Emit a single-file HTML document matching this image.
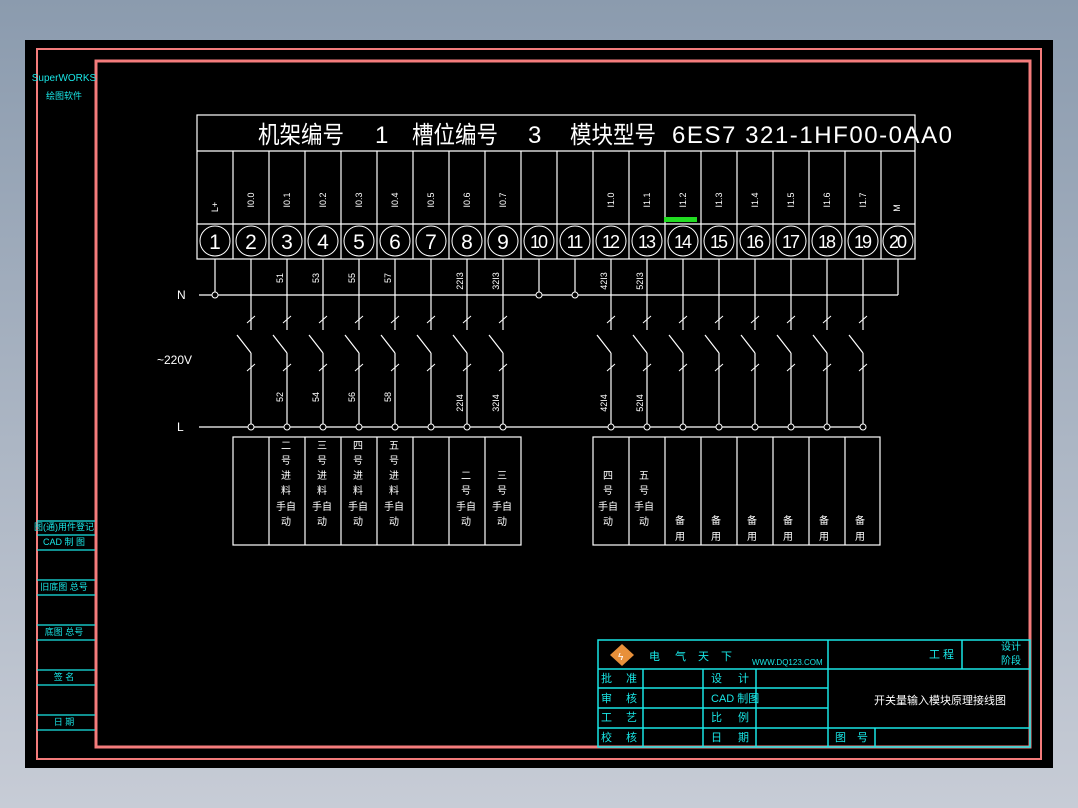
<!DOCTYPE html>
<html><head><meta charset="utf-8"><style>
html,body{margin:0;padding:0;width:1078px;height:808px;overflow:hidden;background:linear-gradient(#8b9bae,#c7ccd6);}
svg{position:absolute;left:0;top:0}
text{font-family:"Liberation Sans","Noto Sans CJK SC",sans-serif}
</style></head><body>
<svg width="1078" height="808" viewBox="0 0 1078 808">
<rect x="25" y="40" width="1028" height="728" fill="#000"/>
<rect x="37" y="49" width="1004" height="710" fill="none" stroke="#f47c7c" stroke-width="2"/>
<rect x="96" y="61" width="934" height="686" fill="none" stroke="#f47c7c" stroke-width="3"/>
<g fill="#19e6e6" font-size="10" text-anchor="middle">
<text x="64" y="81">SuperWORKS</text>
<text x="64" y="99" font-size="9">绘图软件</text>
<text x="64" y="530" font-size="9">图(通)用件登记</text>
<text x="64" y="545" font-size="9">CAD 制 图</text>
<text x="64" y="590" font-size="9">旧底图 总号</text>
<text x="64" y="635" font-size="9">底图 总号</text>
<text x="64" y="680" font-size="9">签 名</text>
<text x="64" y="725" font-size="9">日 期</text>
</g>
<g stroke="#19e6e6" stroke-width="1.2">
<line x1="37" y1="521" x2="95" y2="521"/><line x1="37" y1="535" x2="95" y2="535"/><line x1="37" y1="550" x2="95" y2="550"/>
<line x1="37" y1="580" x2="95" y2="580"/><line x1="37" y1="595" x2="95" y2="595"/>
<line x1="37" y1="625" x2="95" y2="625"/><line x1="37" y1="640" x2="95" y2="640"/>
<line x1="37" y1="670" x2="95" y2="670"/><line x1="37" y1="685" x2="95" y2="685"/>
<line x1="37" y1="715" x2="95" y2="715"/><line x1="37" y1="730" x2="95" y2="730"/>
</g>
<g stroke="#fff" stroke-width="1.2" fill="none">
<rect x="197" y="115" width="718" height="144"/>
<line x1="197" y1="151" x2="915" y2="151"/><line x1="197" y1="224" x2="915" y2="224"/>
<path d="M233 151V259M269 151V259M305 151V259M341 151V259M377 151V259M413 151V259M449 151V259M485 151V259M521 151V259M557 151V259M593 151V259M629 151V259M665 151V259M701 151V259M737 151V259M773 151V259M809 151V259M845 151V259M881 151V259"/>
<g stroke-width="1">
<circle cx="215" cy="241" r="15"/><circle cx="251" cy="241" r="15"/><circle cx="287" cy="241" r="15"/><circle cx="323" cy="241" r="15"/><circle cx="359" cy="241" r="15"/><circle cx="395" cy="241" r="15"/><circle cx="431" cy="241" r="15"/><circle cx="467" cy="241" r="15"/><circle cx="503" cy="241" r="15"/><circle cx="539" cy="241" r="15"/><circle cx="575" cy="241" r="15"/><circle cx="611" cy="241" r="15"/><circle cx="647" cy="241" r="15"/><circle cx="683" cy="241" r="15"/><circle cx="719" cy="241" r="15"/><circle cx="755" cy="241" r="15"/><circle cx="791" cy="241" r="15"/><circle cx="827" cy="241" r="15"/><circle cx="863" cy="241" r="15"/><circle cx="898" cy="241" r="15"/>
</g>
</g>
<rect x="664" y="217" width="33" height="5" fill="#22dd22"/>
<g fill="#fff">
<text x="258" y="143" font-size="24" textLength="86" lengthAdjust="spacingAndGlyphs">机架编号</text>
<text x="375" y="143" font-size="24">1</text>
<text x="412" y="143" font-size="24" textLength="86" lengthAdjust="spacingAndGlyphs">槽位编号</text>
<text x="528" y="143" font-size="24">3</text>
<text x="570" y="143" font-size="24" textLength="86" lengthAdjust="spacingAndGlyphs">模块型号</text>
<text x="672" y="143" font-size="24" textLength="280" lengthAdjust="spacing">6ES7 321-1HF00-0AA0</text>
<g font-size="21" text-anchor="middle">
<text x="215" y="249">1</text><text x="251" y="249">2</text><text x="287" y="249">3</text><text x="323" y="249">4</text><text x="359" y="249">5</text><text x="395" y="249">6</text><text x="431" y="249">7</text><text x="467" y="249">8</text><text x="503" y="249">9</text>
<g font-size="18" letter-spacing="-2"><text x="538" y="248">10</text><text x="574" y="248">11</text><text x="610" y="248">12</text><text x="646" y="248">13</text><text x="682" y="248">14</text><text x="718" y="248">15</text><text x="754" y="248">16</text><text x="790" y="248">17</text><text x="826" y="248">18</text><text x="862" y="248">19</text><text x="897" y="248">20</text></g>
</g>
<g font-size="9" text-anchor="middle">
<text transform="translate(218,207) rotate(-90)">L+</text>
<text transform="translate(254,200) rotate(-90)">I0.0</text>
<text transform="translate(290,200) rotate(-90)">I0.1</text>
<text transform="translate(326,200) rotate(-90)">I0.2</text>
<text transform="translate(362,200) rotate(-90)">I0.3</text>
<text transform="translate(398,200) rotate(-90)">I0.4</text>
<text transform="translate(434,200) rotate(-90)">I0.5</text>
<text transform="translate(470,200) rotate(-90)">I0.6</text>
<text transform="translate(506,200) rotate(-90)">I0.7</text>
<text transform="translate(614,200) rotate(-90)">I1.0</text>
<text transform="translate(650,200) rotate(-90)">I1.1</text>
<text transform="translate(686,200) rotate(-90)">I1.2</text>
<text transform="translate(722,200) rotate(-90)">I1.3</text>
<text transform="translate(758,200) rotate(-90)">I1.4</text>
<text transform="translate(794,200) rotate(-90)">I1.5</text>
<text transform="translate(830,200) rotate(-90)">I1.6</text>
<text transform="translate(866,200) rotate(-90)">I1.7</text>
<text transform="translate(900,208) rotate(-90)">M</text>
</g>
<g font-size="9" text-anchor="middle">
<text transform="translate(283,278) rotate(-90)">51</text><text transform="translate(319,278) rotate(-90)">53</text><text transform="translate(355,278) rotate(-90)">55</text><text transform="translate(391,278) rotate(-90)">57</text>
<text transform="translate(463,281) rotate(-90)">22I3</text><text transform="translate(499,281) rotate(-90)">32I3</text><text transform="translate(607,281) rotate(-90)">42I3</text><text transform="translate(643,281) rotate(-90)">52I3</text>
<text transform="translate(283,397) rotate(-90)">52</text><text transform="translate(319,397) rotate(-90)">54</text><text transform="translate(355,397) rotate(-90)">56</text><text transform="translate(391,397) rotate(-90)">58</text>
<text transform="translate(463,403) rotate(-90)">22I4</text><text transform="translate(499,403) rotate(-90)">32I4</text><text transform="translate(607,403) rotate(-90)">42I4</text><text transform="translate(643,403) rotate(-90)">52I4</text>
</g>
<text x="177" y="299" font-size="12">N</text>
<text x="157" y="364" font-size="12">~220V</text>
<text x="177" y="431" font-size="12">L</text>
</g>
<g stroke="#fff" stroke-width="1.2" fill="none">
<line x1="199" y1="295" x2="898" y2="295"/>
<line x1="199" y1="427" x2="863" y2="427"/>
<path d="M215 259V295M539 259V295M575 259V295M898 259V295"/>
<path d="M251 259V330M251 353V427M237 335L251 353M287 259V330M287 353V427M273 335L287 353M323 259V330M323 353V427M309 335L323 353M359 259V330M359 353V427M345 335L359 353M395 259V330M395 353V427M381 335L395 353M431 259V330M431 353V427M417 335L431 353M467 259V330M467 353V427M453 335L467 353M503 259V330M503 353V427M489 335L503 353"/>
<path d="M611 259V330M611 353V427M597 335L611 353M647 259V330M647 353V427M633 335L647 353M683 259V330M683 353V427M669 335L683 353M719 259V330M719 353V427M705 335L719 353M755 259V330M755 353V427M741 335L755 353M791 259V330M791 353V427M777 335L791 353M827 259V330M827 353V427M813 335L827 353M863 259V330M863 353V427M849 335L863 353"/>
<g stroke-width="1">
<path d="M247 323l8-7M283 323l8-7M319 323l8-7M355 323l8-7M391 323l8-7M427 323l8-7M463 323l8-7M499 323l8-7M607 323l8-7M643 323l8-7M679 323l8-7M715 323l8-7M751 323l8-7M787 323l8-7M823 323l8-7M859 323l8-7"/>
<path d="M247 371l8-7M283 371l8-7M319 371l8-7M355 371l8-7M391 371l8-7M427 371l8-7M463 371l8-7M499 371l8-7M607 371l8-7M643 371l8-7M679 371l8-7M715 371l8-7M751 371l8-7M787 371l8-7M823 371l8-7M859 371l8-7"/>
</g>
<g fill="#000" stroke-width="1">
<circle cx="215" cy="295" r="3"/><circle cx="539" cy="295" r="3"/><circle cx="575" cy="295" r="3"/>
<circle cx="251" cy="427" r="3"/><circle cx="287" cy="427" r="3"/><circle cx="323" cy="427" r="3"/><circle cx="359" cy="427" r="3"/><circle cx="395" cy="427" r="3"/><circle cx="431" cy="427" r="3"/><circle cx="467" cy="427" r="3"/><circle cx="503" cy="427" r="3"/>
<circle cx="611" cy="427" r="3"/><circle cx="647" cy="427" r="3"/><circle cx="683" cy="427" r="3"/><circle cx="719" cy="427" r="3"/><circle cx="755" cy="427" r="3"/><circle cx="791" cy="427" r="3"/><circle cx="827" cy="427" r="3"/><circle cx="863" cy="427" r="3"/>
</g>
<rect x="233" y="437" width="288" height="108"/>
<path d="M269 437V545M305 437V545M341 437V545M377 437V545M413 437V545M449 437V545M485 437V545"/>
<rect x="593" y="437" width="287" height="108"/>
<path d="M629 437V545M665 437V545M701 437V545M737 437V545M773 437V545M809 437V545M845 437V545"/>
</g>
<g fill="#fff" font-size="10" text-anchor="middle">
<text x="286" y="449">二</text><text x="286" y="464">号</text><text x="286" y="479">进</text><text x="286" y="494">料</text><text x="286" y="510">手自</text><text x="286" y="525">动</text>
<text x="322" y="449">三</text><text x="322" y="464">号</text><text x="322" y="479">进</text><text x="322" y="494">料</text><text x="322" y="510">手自</text><text x="322" y="525">动</text>
<text x="358" y="449">四</text><text x="358" y="464">号</text><text x="358" y="479">进</text><text x="358" y="494">料</text><text x="358" y="510">手自</text><text x="358" y="525">动</text>
<text x="394" y="449">五</text><text x="394" y="464">号</text><text x="394" y="479">进</text><text x="394" y="494">料</text><text x="394" y="510">手自</text><text x="394" y="525">动</text>
<text x="466" y="479">二</text><text x="466" y="494">号</text><text x="466" y="510">手自</text><text x="466" y="525">动</text>
<text x="502" y="479">三</text><text x="502" y="494">号</text><text x="502" y="510">手自</text><text x="502" y="525">动</text>
<text x="608" y="479">四</text><text x="608" y="494">号</text><text x="608" y="510">手自</text><text x="608" y="525">动</text>
<text x="644" y="479">五</text><text x="644" y="494">号</text><text x="644" y="510">手自</text><text x="644" y="525">动</text>
<text x="680" y="524">备</text><text x="680" y="540">用</text><text x="716" y="524">备</text><text x="716" y="540">用</text><text x="752" y="524">备</text><text x="752" y="540">用</text><text x="788" y="524">备</text><text x="788" y="540">用</text><text x="824" y="524">备</text><text x="824" y="540">用</text><text x="860" y="524">备</text><text x="860" y="540">用</text>
</g>
<g stroke="#19e6e6" stroke-width="1.5" fill="none">
<rect x="598" y="640" width="432" height="107"/>
<line x1="598" y1="669" x2="1030" y2="669"/>
<line x1="598" y1="688" x2="828" y2="688"/><line x1="598" y1="708" x2="828" y2="708"/>
<line x1="598" y1="728" x2="1030" y2="728"/>
<path d="M643 669V747M703 669V747M756 669V747M828 640V747M875 728V747M962 640V669"/>
</g>
<path d="M622 644L634 655L622 666L610 655Z" fill="#e8903a"/>
<text x="618" y="660" fill="#fff" font-size="10">ϟ</text>
<g fill="#19e6e6" font-size="11">
<text x="649" y="660">电</text><text x="675" y="660">气</text><text x="698" y="660">天</text><text x="721" y="660">下</text>
<text x="752" y="665" font-size="8">WWW.DQ123.COM</text>
<text x="929" y="658">工 程</text>
<text x="1001" y="650" font-size="10">设计</text><text x="1001" y="664" font-size="10">阶段</text>
<text x="601" y="682">批</text><text x="626" y="682">准</text>
<text x="601" y="702">审</text><text x="626" y="702">核</text>
<text x="601" y="721">工</text><text x="626" y="721">艺</text>
<text x="601" y="741">校</text><text x="626" y="741">核</text>
<text x="711" y="682">设</text><text x="738" y="682">计</text>
<text x="711" y="702">CAD 制图</text>
<text x="711" y="721">比</text><text x="738" y="721">例</text>
<text x="711" y="741">日</text><text x="738" y="741">期</text>
<text x="835" y="741">图</text><text x="857" y="741">号</text>
</g>
<text x="874" y="704" fill="#fff" font-size="11">开关量输入模块原理接线图</text>
</svg>
</body></html>
